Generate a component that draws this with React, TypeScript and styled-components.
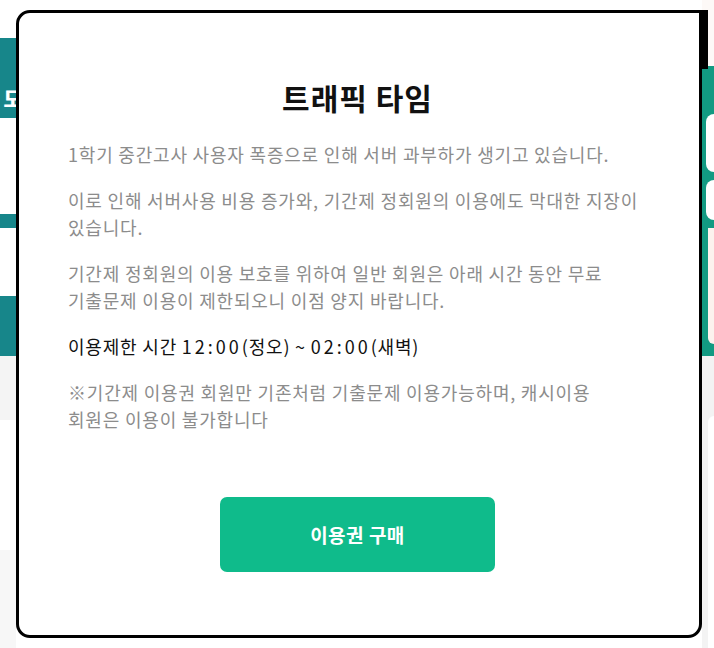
import React from "react";
import styled, { createGlobalStyle } from "styled-components";

const GlobalStyle = createGlobalStyle`
  html, body {
    margin: 0;
    padding: 0;
    background: #ffffff;
    font-family: "Noto Sans CJK KR", "Noto Sans", sans-serif;
  }
  * { box-sizing: border-box; }
`;

type Band = { h: number; bg: string; label?: string };

const leftBands: Band[] = [
  { h: 38, bg: "#ffffff" },
  { h: 80, bg: "#17868a", label: "도" },
  { h: 96, bg: "#ffffff" },
  { h: 14, bg: "#17868a" },
  { h: 68, bg: "#ffffff" },
  { h: 60, bg: "#17868a" },
  { h: 64, bg: "#f4f4f4" },
  { h: 130, bg: "#ffffff" },
  { h: 98, bg: "#f7f7f7" },
];

const notices = [
  "1학기 중간고사 사용자 폭증으로 인해 서버 과부하가 생기고 있습니다.",
  "이로 인해 서버사용 비용 증가와, 기간제 정회원의 이용에도 막대한 지장이 있습니다.",
  "기간제 정회원의 이용 보호를 위하여 일반 회원은 아래 시간 동안 무료 기출문제 이용이 제한되오니 이점 양지 바랍니다.",
];

const App: React.FC = () => {
  return (
    <>
      <GlobalStyle />
      <Page>
        <LeftRail>
          {leftBands.map((b, i) => (
            <RailBand key={i} $h={b.h} $bg={b.bg}>
              {b.label && <RailLabel>{b.label}</RailLabel>}
            </RailBand>
          ))}
        </LeftRail>
        <Middle />
        <RightRail>
          <RightTop />
          <RightHero>
            <HeroChip $h={58} />
            <HeroChip $h={40} />
            <HeroCard />
          </RightHero>
          <RightBody>
            <BodyCard />
          </RightBody>
        </RightRail>

        <Modal>
          <CornerBlock />
          <Title>트래픽 타임</Title>
          <Notices>
            {notices.map((n) => (
              <Notice key={n}>{n}</Notice>
            ))}
            <Notice $strong>
              이용제한 시간 <Clock>12:00</Clock>(정오) ~ <Clock>02:00</Clock>(새벽)
            </Notice>
            <Notice>
              ※기간제 이용권 회원만 기존처럼 기출문제 이용가능하며, 캐시이용
              <br />
              회원은 이용이 불가합니다
            </Notice>
          </Notices>
          <BuyButton type="button">이용권 구매</BuyButton>
        </Modal>
      </Page>
    </>
  );
};

export default App;

const Page = styled.div`
  position: relative;
  display: flex;
  width: 714px;
  height: 648px;
  overflow: hidden;
`;

const LeftRail = styled.div`
  display: flex;
  flex-direction: column;
  width: 16px;
  flex-shrink: 0;
`;

const RailBand = styled.div<{ $h: number; $bg: string }>`
  height: ${(p) => p.$h}px;
  background: ${(p) => p.$bg};
  display: flex;
  align-items: flex-end;
  justify-content: flex-end;
  overflow: hidden;
`;

const RailLabel = styled.span`
  color: #ffffff;
  font-weight: 900;
  font-size: 20px;
  line-height: 1;
  margin-bottom: 9px;
  margin-right: -6px;
`;

const Middle = styled.div`
  flex: 1;
  background: #ffffff;
`;

const RightRail = styled.div`
  display: flex;
  flex-direction: column;
  width: 12px;
  flex-shrink: 0;
`;

const RightTop = styled.div`
  height: 66px;
  background: #fdf9f7;
`;

const RightHero = styled.div`
  height: 290px;
  background: #129a82;
  display: flex;
  flex-direction: column;
  gap: 8px;
  padding: 48px 0 12px 4px;
`;

const HeroChip = styled.div<{ $h: number }>`
  height: ${(p) => p.$h}px;
  background: #ffffff;
  border-radius: 8px 0 0 8px;
`;

const HeroCard = styled.div`
  flex: 1;
  margin-left: 2px;
  background: #fcf2ee;
  border-radius: 0 0 0 8px;
`;

const RightBody = styled.div`
  flex: 1;
  background: #f3f3f3;
  padding: 60px 0 0 6px;
`;

const BodyCard = styled.div`
  height: 100%;
  background: #ffffff;
  border-radius: 6px 0 0 0;
`;

const Modal = styled.section`
  position: absolute;
  left: 16px;
  top: 10px;
  width: 686px;
  height: 628px;
  background: #ffffff;
  border: 3px solid #000000;
  border-radius: 14px 0 14px 14px;
  padding: 66px 52px 0 49px;
  display: flex;
  flex-direction: column;
`;

const CornerBlock = styled.div`
  position: absolute;
  top: -3px;
  right: -9px;
  width: 9px;
  height: 59px;
  background: #000000;
`;

const Title = styled.h2`
  margin: 0;
  text-align: center;
  font-size: 30px;
  line-height: 36px;
  letter-spacing: 1px;
  font-weight: 700;
  color: #111111;
`;

const Notices = styled.div`
  display: flex;
  flex-direction: column;
  gap: 19px;
  margin-top: 26px;
`;

const Notice = styled.p<{ $strong?: boolean }>`
  margin: 0;
  font-size: 18px;
  line-height: 27px;
  letter-spacing: 0.8px;
  word-break: keep-all;
  color: ${(p) => (p.$strong ? "#111111" : "#8c8c8c")};
`;

const Clock = styled.span`
  letter-spacing: 3px;
`;

const BuyButton = styled.button`
  align-self: center;
  margin-top: 64px;
  width: 275px;
  height: 75px;
  border: none;
  border-radius: 7px;
  background: #0fbb8b;
  color: #ffffff;
  font-family: "Noto Sans CJK KR", "Noto Sans", sans-serif;
  font-size: 19px;
  letter-spacing: 0.5px;
  font-weight: 700;
  cursor: pointer;
`;
